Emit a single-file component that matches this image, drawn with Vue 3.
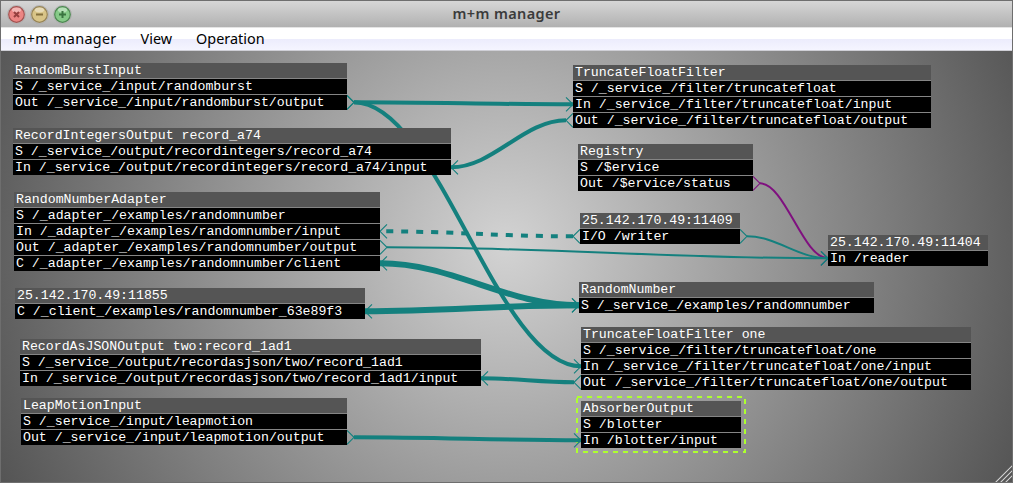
<script setup>
const TEAL = '#14807e'
const PURPLE = '#7f107f'
const ROW = 16

const nodes = [
  { id: 'burst', x: 13, y: 63, w: 334, title: 'RandomBurstInput', rows: ['S /_service_/input/randomburst', 'Out /_service_/input/randomburst/output'] },
  { id: 'ints', x: 13, y: 128, w: 438, title: 'RecordIntegersOutput record_a74', rows: ['S /_service_/output/recordintegers/record_a74', 'In /_service_/output/recordintegers/record_a74/input'] },
  { id: 'adapter', x: 14, y: 192, w: 366, title: 'RandomNumberAdapter', rows: ['S /_adapter_/examples/randomnumber', 'In /_adapter_/examples/randomnumber/input', 'Out /_adapter_/examples/randomnumber/output', 'C /_adapter_/examples/randomnumber/client'] },
  { id: 'client', x: 15, y: 288, w: 350, title: '25.142.170.49:11855', rows: ['C /_client_/examples/randomnumber_63e89f3'] },
  { id: 'json', x: 20, y: 339, w: 461, title: 'RecordAsJSONOutput two:record_1ad1', rows: ['S /_service_/output/recordasjson/two/record_1ad1', 'In /_service_/output/recordasjson/two/record_1ad1/input'] },
  { id: 'leap', x: 21, y: 398, w: 326, title: 'LeapMotionInput', rows: ['S /_service_/input/leapmotion', 'Out /_service_/input/leapmotion/output'] },
  { id: 'trunc', x: 573, y: 65, w: 358, title: 'TruncateFloatFilter', rows: ['S /_service_/filter/truncatefloat', 'In /_service_/filter/truncatefloat/input', 'Out /_service_/filter/truncatefloat/output'] },
  { id: 'registry', x: 578, y: 144, w: 175, title: 'Registry', rows: ['S /$ervice', 'Out /$ervice/status'] },
  { id: 'writer', x: 580, y: 213, w: 160, title: '25.142.170.49:11409', rows: ['I/O /writer'] },
  { id: 'reader', x: 828, y: 235, w: 160, title: '25.142.170.49:11404', rows: ['In /reader'] },
  { id: 'number', x: 579, y: 282, w: 295, title: 'RandomNumber', rows: ['S /_service_/examples/randomnumber'] },
  { id: 'truncOne', x: 581, y: 327, w: 390, title: 'TruncateFloatFilter one', rows: ['S /_service_/filter/truncatefloat/one', 'In /_service_/filter/truncatefloat/one/input', 'Out /_service_/filter/truncatefloat/one/output'] },
  { id: 'absorber', x: 581, y: 401, w: 160, title: 'AbsorberOutput', rows: ['S /blotter', 'In /blotter/input'] },
]

// A port is [node id, row number, side, kind].
const links = [
  { from: ['burst', 2, 'r', 'out'], to: ['trunc', 2, 'l', 'in'], width: 4 },
  { from: ['burst', 2, 'r', 'out'], to: ['truncOne', 2, 'l', 'in'], width: 4 },
  { from: ['trunc', 3, 'l', 'out'], to: ['ints', 2, 'r', 'in'], width: 4 },
  { from: ['writer', 1, 'l', 'out'], to: ['adapter', 2, 'r', 'in'], width: 4, dash: '7 8' },
  { from: ['registry', 2, 'r', 'out'], to: ['reader', 1, 'l', 'in'], width: 2, color: PURPLE },
  { from: ['writer', 1, 'r', 'out'], to: ['reader', 1, 'l', 'in'], width: 2 },
  { from: ['adapter', 3, 'r', 'out'], to: ['reader', 1, 'l', 'in'], width: 2 },
  { from: ['adapter', 4, 'r', 'in'], to: ['number', 1, 'l', 'in'], width: 6 },
  { from: ['client', 1, 'r', 'in'], to: ['number', 1, 'l', 'in'], width: 6 },
  { from: ['truncOne', 3, 'l', 'out'], to: ['json', 2, 'r', 'in'], width: 4 },
  { from: ['leap', 2, 'r', 'out'], to: ['absorber', 2, 'l', 'in'], width: 4 },
]

function port([id, row, side, kind]) {
  const n = nodes.find((item) => item.id === id)
  const dir = side === 'r' ? 1 : -1
  const edge = side === 'r' ? n.x + n.w : n.x
  const y = n.y + row * ROW + 7.3
  const far = edge + dir * 7
  const tip = kind === 'out' ? far : edge
  const open = kind === 'out' ? edge : far
  return { x: tip, y, mark: `M${open} ${y - 7}L${tip} ${y}L${open} ${y + 7}` }
}

const wires = links.map((link) => {
  const a = port(link.from)
  const b = port(link.to)
  const c = (b.x - a.x) * 0.37
  return {
    d: `M${a.x} ${a.y}C${a.x + c} ${a.y} ${b.x - c} ${b.y} ${b.x} ${b.y}`,
    marks: a.mark + b.mark,
    width: link.width,
    dash: link.dash,
    color: link.color || TEAL,
  }
})
</script>

<template>
  <div class="window">
    <header class="titlebar">
      <div class="lights">
        <svg v-for="kind in ['close', 'minimize', 'zoom']" :key="kind" class="light" :class="kind" viewBox="0 0 19 19">
          <circle class="halo" cx="9.5" cy="9.5" r="9" />
          <circle class="disc" cx="9.5" cy="9.5" r="7.8" />
          <ellipse class="shine" cx="9.5" cy="5" rx="4.6" ry="2.4" />
          <path v-if="kind === 'close'" class="glyph" d="M7 7l5 5M12 7l-5 5" />
          <path v-else-if="kind === 'minimize'" class="glyph" d="M6 9.5h7" />
          <path v-else class="glyph" d="M6 9.5h7M9.5 6v7" />
        </svg>
      </div>
      <h1 class="title">m+m manager</h1>
    </header>
    <nav class="menubar">
      <span class="app-menu">m+m manager</span>
      <span class="view-menu">View</span>
      <span class="operation-menu">Operation</span>
    </nav>
    <main class="canvas">
      <div class="board">
        <svg class="wires" viewBox="0 0 1013 483">
          <rect class="selection" x="577" y="397" width="168" height="55" />
          <g v-for="(wire, i) in wires" :key="i" fill="none" :stroke="wire.color">
            <path :d="wire.d" :stroke-width="wire.width" :stroke-dasharray="wire.dash" />
            <path :d="wire.marks" stroke-width="1.1" />
          </g>
        </svg>
        <section v-for="node in nodes" :key="node.id" class="node" :style="{ left: node.x + 'px', top: node.y + 'px', width: node.w + 'px' }">
          <div class="name">{{ node.title }}</div>
          <div v-for="row in node.rows" :key="row" class="row">{{ row }}</div>
        </section>
      </div>
      <svg class="grip" viewBox="0 0 20 20">
        <path class="grip-shade" d="M3 20L20 3M8 20L20 8M13 20L20 13" />
        <path class="grip-line" d="M2 20L20 2M7 20L20 7M12 20L20 12" />
      </svg>
    </main>
  </div>
</template>

<style>
body {
  margin: 0;
  overflow: hidden;
}
</style>

<style scoped>
.window {
  box-sizing: border-box;
  position: relative;
  width: 1013px;
  height: 483px;
  border: 1px solid #6e6e6e;
  display: flex;
  flex-direction: column;
  overflow: hidden;
  font-family: "Noto Sans", "Open Sans", sans-serif;
}
.titlebar {
  box-sizing: border-box;
  flex: none;
  height: 26px;
  display: grid;
  grid-template-columns: 100px 1fr 100px;
  align-items: center;
  background: linear-gradient(#d6d6d6, #b1b1b1);
}
.lights {
  display: flex;
  gap: 4px;
  padding-left: 6px;
}
.light {
  width: 19px;
  height: 19px;
}
.halo {
  fill: #d0d0d0;
  stroke: #a2a2a2;
  stroke-width: 0.6;
}
.disc {
  stroke-width: 1.2;
}
.close .disc { fill: #ec8583; stroke: #a15250; }
.minimize .disc { fill: #d8c487; stroke: #968355; }
.zoom .disc { fill: #86ca88; stroke: #4c8650; }
.shine {
  fill: #fff;
  opacity: 0.4;
}
.glyph {
  fill: none;
  stroke-width: 2;
}
.close .glyph { stroke: #96403f; }
.minimize .glyph { stroke: #85703d; }
.zoom .glyph { stroke: #3a7440; }
.title {
  margin: 0;
  padding-bottom: 2px;
  text-align: center;
  font-size: 14.5px;
  line-height: 24px;
  font-weight: 600;
  letter-spacing: 0.38px;
  color: #3b3b3b;
  white-space: nowrap;
}
.menubar {
  box-sizing: border-box;
  flex: none;
  height: 24px;
  display: flex;
  gap: 24px;
  padding-left: 12px;
  border-top: 1px solid #e4e4e4;
  border-bottom: 1px solid #cfcfd6;
  background: linear-gradient(#fff 0, #fff 11px, #ececfc 11px, #f5f5ff 22px);
  font-size: 14.4px;
  line-height: 22px;
  color: #000;
  white-space: nowrap;
}
.app-menu {
  letter-spacing: 0.3px;
}
.canvas {
  position: relative;
  flex: 1;
  background: radial-gradient(circle 555px at 505px 195px, #d3d3d3, #555);
}
.board {
  position: absolute;
  left: -1px;
  top: -51px;
  width: 1013px;
  height: 483px;
}
.wires {
  position: absolute;
  left: 0;
  top: 0;
  width: 1013px;
  height: 483px;
}
.selection {
  fill: none;
  stroke: #adff2f;
  stroke-width: 2;
  stroke-dasharray: 5 5;
}
.node {
  position: absolute;
  display: grid;
  grid-auto-rows: 15px;
  gap: 1px;
  background: #858585;
  font-family: "Liberation Mono", monospace;
  font-size: 13.23px;
  line-height: 15px;
  color: #fff;
  white-space: pre;
}
.name,
.row {
  padding-left: 2px;
}
.name {
  background: #555;
}
.row {
  background: #000;
}
.grip {
  position: absolute;
  right: -1px;
  bottom: -1px;
  width: 20px;
  height: 20px;
  fill: none;
}
.grip-line {
  stroke: #d2d2d2;
  stroke-width: 1.2;
}
.grip-shade {
  stroke: #444;
  stroke-width: 1;
}
</style>
